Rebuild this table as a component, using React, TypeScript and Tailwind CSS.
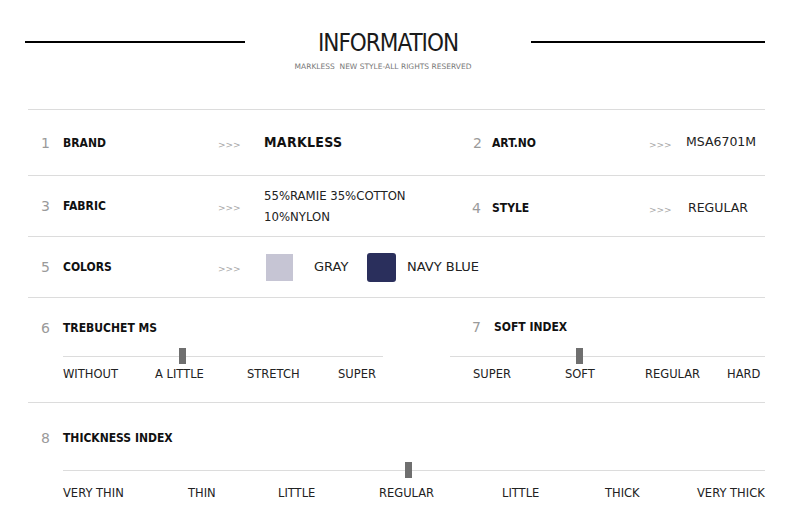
import React from 'react'

const font = "font-['DejaVu_Sans',sans-serif]"
const cond = "font-['DejaVu_Sans_Condensed','DejaVu_Sans',sans-serif]"

function Num({ n }: { n: number }) {
  return <span className="text-[14px] text-[#9a9a9a] leading-none">{n}</span>
}

function Arrows() {
  return <span className="text-[9px] text-[#a8a8a8] leading-none">&gt;&gt;&gt;</span>
}

function Label({ children, w }: { children: React.ReactNode; w?: string }) {
  return <div className={`${cond} ${w ?? ''} text-[12px] font-bold text-[#111]`}>{children}</div>
}

function Track({ thumb }: { thumb: number }) {
  return (
    <div className="relative h-px bg-[#dcdcdc]">
      <div className="absolute top-[-8px] w-[7px] h-[16px] bg-[#6f6f6f]" style={{ left: thumb }} />
    </div>
  )
}

function Labels({ items }: { items: [string, number][] }) {
  return (
    <div className="flex text-[11.5px] text-[#222] leading-none">
      {items.map(([t, w], i) => (
        <span key={i} className="shrink-0 whitespace-nowrap" style={{ width: w }}>{t}</span>
      ))}
    </div>
  )
}

export default function App() {
  return (
    <div className={`w-[790px] h-[515px] bg-white overflow-hidden ${font}`}>
      <header className="h-[109px] flex items-start pt-[31px] px-[25px]">
        <div className="w-[220px] h-[2px] bg-black mt-[10px]" />
        <div className="flex-1 flex flex-col items-center">
          <h1 className={`${cond} text-[24px] leading-[24px] text-[#1a1a1a] font-light tracking-[-1px]`}>INFORMATION</h1>
          <p className="text-[7.5px] text-[#777] mt-[6px] mr-[10px]">MARKLESS&nbsp; NEW STYLE-ALL RIGHTS RESERVED</p>
        </div>
        <div className="w-[234px] h-[2px] bg-black mt-[10px]" />
      </header>

      <div className="ml-[28px] mr-[25px] border-t border-[#dcdcdc]">
        {/* row 1 */}
        <div className="h-[66px] flex items-center border-b border-[#dcdcdc]">
          <div className="w-[444px] flex items-center">
            <div className="w-[35px] pl-[13px]"><Num n={1} /></div>
            <Label w="w-[155px]">BRAND</Label>
            <div className="w-[46px]"><Arrows /></div>
            <div className={`${cond} text-[14px] font-bold text-[#111] tracking-[0.3px]`}>MARKLESS</div>
          </div>
          <div className="flex items-center">
            <div className="w-[20px] pl-[1px]"><Num n={2} /></div>
            <Label w="w-[157px]">ART.NO</Label>
            <div className="w-[37px]"><Arrows /></div>
            <div className="text-[12.5px] text-[#222]">MSA6701M</div>
          </div>
        </div>

        {/* row 2 */}
        <div className="h-[61px] flex items-center border-b border-[#dcdcdc]">
          <div className="w-[444px] flex items-center">
            <div className="w-[35px] pl-[13px]"><Num n={3} /></div>
            <Label w="w-[155px]">FABRIC</Label>
            <div className="w-[46px]"><Arrows /></div>
            <div className={`${cond} text-[13px] text-[#222] leading-[21px]`}>55%RAMIE 35%COTTON<br />10%NYLON</div>
          </div>
          <div className="flex items-center pt-[4px]">
            <div className="w-[20px]"><Num n={4} /></div>
            <Label w="w-[157px]">STYLE</Label>
            <div className="w-[39px]"><Arrows /></div>
            <div className="text-[12.5px] text-[#222]">REGULAR</div>
          </div>
        </div>

        {/* row 3 */}
        <div className="h-[61px] flex items-center border-b border-[#dcdcdc]">
          <div className="w-[35px] pl-[13px]"><Num n={5} /></div>
          <Label w="w-[155px]">COLORS</Label>
          <div className="w-[48px]"><Arrows /></div>
          <div className="w-[27px] h-[27px] bg-[#c6c5d4]" />
          <div className="w-[74px] pl-[21px] text-[13px] text-[#222]">GRAY</div>
          <div className="w-[29px] h-[29px] rounded-[3px] bg-[#2a2f5c]" />
          <div className="pl-[11px] text-[13px] text-[#222]">NAVY BLUE</div>
        </div>

        {/* row 4: sliders */}
        <div className="h-[105px] flex border-b border-[#dcdcdc]">
          <div className="w-[355px] pt-[18px]">
            <div className="flex items-center">
              <div className="w-[35px] pl-[13px]"><Num n={6} /></div>
              <Label>TREBUCHET MS</Label>
            </div>
            <div className="ml-[35px] mt-[16px] w-[320px]">
              <Track thumb={116} />
              <div className="mt-[12px]">
                <Labels items={[['WITHOUT', 92], ['A LITTLE', 92], ['STRETCH', 91], ['SUPER', 45]]} />
              </div>
            </div>
          </div>
          <div className="flex-1 min-w-0 pl-[67px] pt-[17px]">
            <div className="flex items-center pl-[22px]">
              <div className="w-[22px]"><Num n={7} /></div>
              <Label>SOFT INDEX</Label>
            </div>
            <div className="mt-[17px]">
              <Track thumb={126} />
              <div className="mt-[12px] pl-[23px]">
                <Labels items={[['SUPER', 92], ['SOFT', 80], ['REGULAR', 82], ['HARD', 38]]} />
              </div>
            </div>
          </div>
        </div>

        {/* row 5: thickness */}
        <div className="pt-[23px]">
          <div className="flex items-center">
            <div className="w-[35px] pl-[13px]"><Num n={8} /></div>
            <Label>THICKNESS INDEX</Label>
          </div>
          <div className="ml-[35px] mt-[20px]">
            <Track thumb={342} />
            <div className="mt-[17px]">
              <Labels items={[['VERY THIN', 125], ['THIN', 90], ['LITTLE', 101], ['REGULAR', 123], ['LITTLE', 103], ['THICK', 92], ['VERY THICK', 68]]} />
            </div>
          </div>
        </div>
      </div>
    </div>
  )
}
